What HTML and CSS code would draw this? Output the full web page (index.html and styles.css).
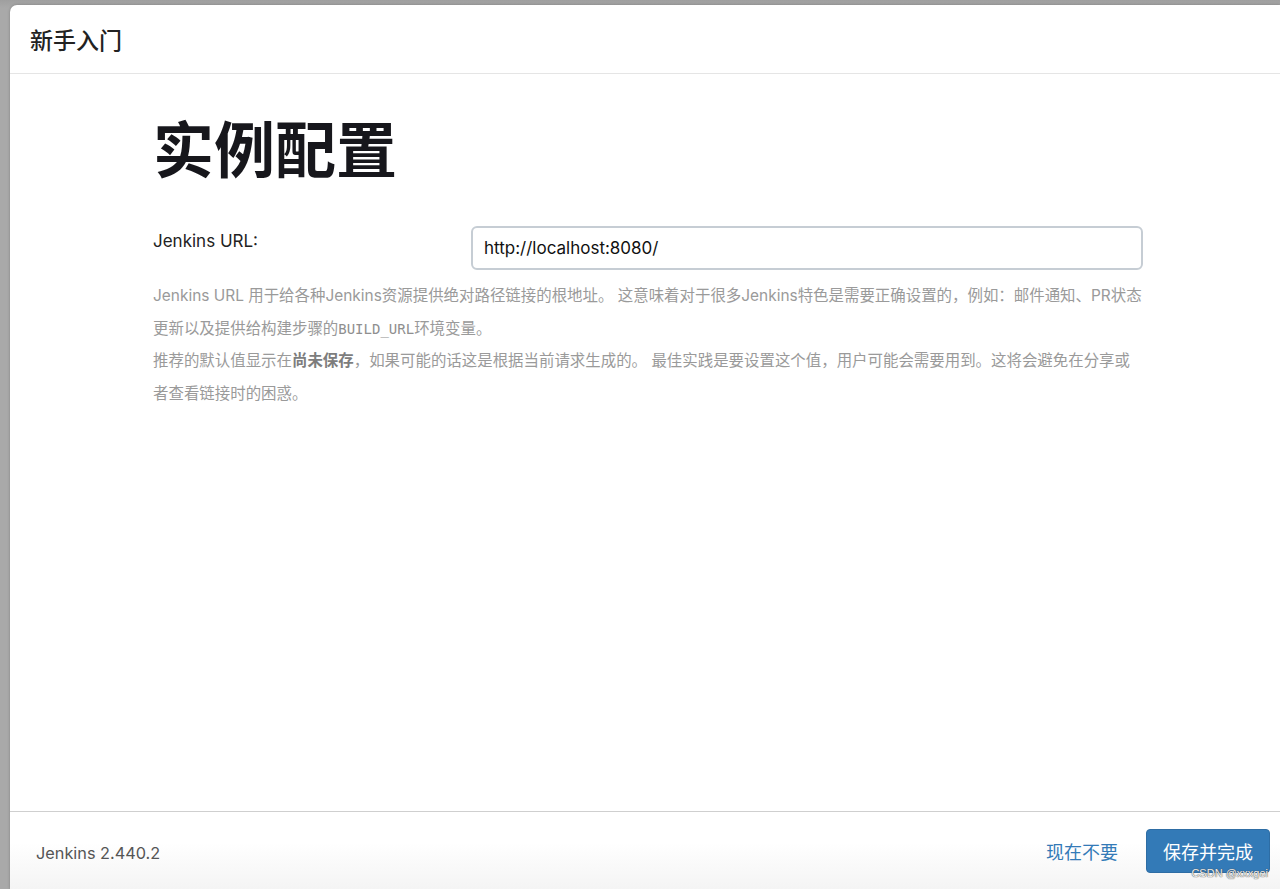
FILE: index.html
```html
<!DOCTYPE html>
<html lang="zh-CN">
<head>
<meta charset="utf-8">
<title>新手入门</title>
<link rel="stylesheet" href="styles.css">
</head>
<body>
<div class="modal">
  <div class="modal-header">
    <h4 class="modal-title">新手入门</h4>
  </div>
  <div class="modal-body">
    <div class="container">
      <h1 class="page-title">实例配置</h1>
      <div class="form-row">
        <label class="form-label" for="url">Jenkins URL:</label>
        <input class="form-input" id="url" type="text" value="http://localhost:8080/">
      </div>
      <div class="help">
        <p>Jenkins URL 用于给各种Jenkins资源提供绝对路径链接的根地址。 这意味着对于很多Jenkins特色是需要正确设置的，例如：邮件通知、PR状态更新以及提供给构建步骤的<code>BUILD_URL</code>环境变量。</p>
        <p>推荐的默认值显示在<strong>尚未保存</strong>，如果可能的话这是根据当前请求生成的。 最佳实践是要设置这个值，用户可能会需要用到。这将会避免在分享或者查看链接时的困惑。</p>
      </div>
    </div>
  </div>
  <div class="modal-footer">
    <span class="version">Jenkins 2.440.2</span>
    <div class="actions">
      <a class="btn-link" href="#">现在不要</a>
      <button class="btn-primary" type="button">保存并完成</button>
    </div>
    <span class="watermark">CSDN @xxxgei</span>
  </div>
</div>
</body>
</html>
```
FILE: styles.css
```css
html, body {
  margin: 0;
  padding: 0;
  height: 100%;
  overflow: hidden;
}

body {
  background: linear-gradient(#9f9f9f, #a9a9a9 8px, #a9a9a9);
  font-family: Inter, "Noto Sans CJK SC", sans-serif;
  color: #1d1d22;
}

.modal {
  margin: 5px 0 0 10px;
  height: 884px;
  background: #fff;
  border-top-left-radius: 7px;
  box-shadow: 0 0 3px rgba(0, 0, 0, 0.25);
  display: flex;
  flex-direction: column;
  position: relative;
}

.modal-header {
  height: 69px;
  flex: none;
  box-sizing: border-box;
  border-bottom: 1px solid #e5e5e5;
  display: flex;
  align-items: center;
  padding-left: 20px;
}

.modal-title {
  margin: 0;
  font-family: "Noto Sans CJK SC", sans-serif;
  font-size: 23px;
  font-weight: 500;
  color: #222;
}

.modal-body {
  flex: 1;
  padding-top: 33px;
}

.container {
  width: 990px;
  margin-left: 143px;
}

.page-title {
  margin: 0 0 39px;
  font-family: "Noto Sans CJK SC", sans-serif;
  font-size: 61px;
  font-weight: 700;
  line-height: 80px;
  color: #17171c;
}

.form-row {
  display: flex;
  align-items: flex-start;
}

.form-label {
  width: 318px;
  flex: none;
  font-size: 17px;
  color: #222;
  padding-top: 4px;
  line-height: 22px;
}

.form-input {
  flex: 1;
  height: 44px;
  box-sizing: border-box;
  border: 2px solid #c6cdd4;
  border-radius: 6px;
  padding: 0 11px;
  font-family: Inter, sans-serif;
  font-size: 17px;
  color: #111;
  outline: none;
  background: #fff;
}

.help {
  margin-top: 10px;
  width: 989px;
  font-size: 15.45px;
  line-height: 32.5px;
  color: #9a9a9a;
}

.help p {
  margin: 0;
}

.help code {
  font-family: "DejaVu Sans Mono", "Liberation Mono", monospace;
  font-size: 14px;
  color: #8f8f8f;
}

.help strong {
  font-weight: 700;
  color: #7d7d7d;
}

.modal-footer {
  height: 78px;
  flex: none;
  box-sizing: border-box;
  border-top: 1px solid #cfcfcf;
  background: linear-gradient(#fff, #fff 40%, #f4f4f4);
  display: flex;
  align-items: center;
  justify-content: space-between;
  padding: 0 10px 0 26px;
  position: relative;
}

.version {
  font-size: 16.3px;
  color: #555;
  margin-top: 4px;
}

.actions {
  display: flex;
  align-items: center;
  gap: 28px;
}

.btn-link {
  font-family: "Noto Sans CJK SC", sans-serif;
  font-size: 18px;
  color: #337ab7;
  text-decoration: none;
}

.btn-primary {
  height: 44px;
  width: 124px;
  border: 1px solid #2e6da4;
  border-radius: 4px;
  background: #337ab7;
  color: #fff;
  font-family: "Noto Sans CJK SC", sans-serif;
  font-size: 18px;
  padding: 0;
}

.watermark {
  position: absolute;
  right: 12px;
  bottom: 10px;
  font-family: "Liberation Sans", sans-serif;
  font-size: 11px;
  color: rgba(255, 255, 255, 0.9);
  text-shadow: 0 0 1px #555, 0 0 1px #555;
}
```
